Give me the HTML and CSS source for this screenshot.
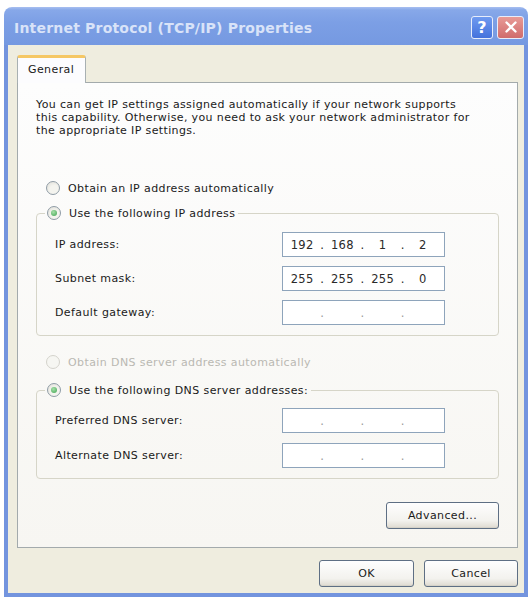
FILE: index.html
```html
<!DOCTYPE html>
<html>
<head>
<meta charset="utf-8">
<title>Internet Protocol (TCP/IP) Properties</title>
<link rel="stylesheet" href="styles.css">
</head>
<body>
<div class="window">
  <div class="titlebar">
    <span class="title">Internet Protocol (TCP/IP) Properties</span>
    <div class="tb-buttons">
      <span class="tb help">?</span>
      <span class="tb close"><svg viewBox="0 0 20 20" width="20" height="20"><path d="M5 5 L15 15 M15 5 L5 15" stroke="#fff" stroke-width="2.6" stroke-linecap="round"/></svg></span>
    </div>
  </div>
  <div class="client">
    <div class="tabs"><div class="tab">General</div></div>
    <div class="panel">
      <p class="intro">You can get IP settings assigned automatically if your network supports<br>this capability. Otherwise, you need to ask your network administrator for<br>the appropriate IP settings.</p>
      <div class="radio-row first"><span class="radio"></span>Obtain an IP address automatically</div>
      <fieldset class="group ip">
        <legend><span class="radio on"></span>Use the following IP address</legend>
        <div class="row"><span class="label">IP address:</span>
          <div class="ipbox"><span>192</span><i>.</i><span>168</span><i>.</i><span>1</span><i>.</i><span>2</span></div></div>
        <div class="row"><span class="label">Subnet mask:</span>
          <div class="ipbox"><span>255</span><i>.</i><span>255</span><i>.</i><span>255</span><i>.</i><span>0</span></div></div>
        <div class="row"><span class="label">Default gateway:</span>
          <div class="ipbox empty"><span></span><i>.</i><span></span><i>.</i><span></span><i>.</i><span></span></div></div>
      </fieldset>
      <div class="radio-row disabled"><span class="radio"></span>Obtain DNS server address automatically</div>
      <fieldset class="group dns">
        <legend><span class="radio on"></span>Use the following DNS server addresses:</legend>
        <div class="row"><span class="label">Preferred DNS server:</span>
          <div class="ipbox empty"><span></span><i>.</i><span></span><i>.</i><span></span><i>.</i><span></span></div></div>
        <div class="row"><span class="label">Alternate DNS server:</span>
          <div class="ipbox empty"><span></span><i>.</i><span></span><i>.</i><span></span><i>.</i><span></span></div></div>
      </fieldset>
      <div class="adv-row"><button class="btn adv">Advanced...</button></div>
    </div>
    <div class="actions">
      <button class="btn ok">OK</button>
      <button class="btn cancel">Cancel</button>
    </div>
  </div>
</div>
</body>
</html>
```

FILE: styles.css
```css
* { box-sizing: border-box; }
html, body { margin: 0; padding: 0; background: #ffffff; }
body {
  font-family: "DejaVu Sans", "Liberation Sans", Arial, sans-serif;
  font-size: 11px;
  letter-spacing: 0.4px;
  color: #1a1a1a;
}

.window {
  margin: 7px 3px 0 4px;
  width: 524px;
  display: flex;
  flex-direction: column;
}

.titlebar {
  height: 38px;
  border-radius: 8px 8px 0 0;
  background: linear-gradient(#a8bff0 0, #87a8e9 3px, #7c9fe5 40%, #7599e1 100%);
  display: flex;
  align-items: center;
  padding: 4px 4px 0 10px;
}
.title {
  flex: 1;
  font-weight: bold;
  font-size: 14px;
  letter-spacing: 0.2px;
  color: #d9e3f8;
}
.tb-buttons { display: flex; gap: 4px; margin-top: -2px; }
.tb {
  width: 22px;
  height: 23px;
  border-radius: 3px;
  border: 1px solid #e7edfb;
  display: flex;
  align-items: center;
  justify-content: center;
  color: #fff;
  font-weight: bold;
  font-size: 16px;
  letter-spacing: 0;
}
.help { background: linear-gradient(#6f9af0, #4472dc); }
.close { width: 27px; background: linear-gradient(#e89a96, #d06c6c); }
.close svg { width: 18px; height: 18px; }

.client {
  background: #efeddf;
  border: 4px solid #7394de;
  border-top: 0;
  padding: 10px 6px 6px 9px;
  display: flex;
  flex-direction: column;
}

.tabs { display: flex; height: 27px; }
.tab {
  width: 69px;
  height: 28px;
  background: #fcfcfe;
  border: 1px solid #a8b0b2;
  border-top: 3px solid #f5c764;
  border-bottom: 0;
  border-radius: 3px 3px 0 0;
  padding: 5px 0 0 10px;
  position: relative;
  z-index: 1;
}

.panel {
  background: linear-gradient(#fdfdfd, #f7f6f2);
  border: 1px solid #a3aaac;
  padding: 15px 18px 18px 18px;
}

.intro {
  margin: 0;
  line-height: 13px;
  letter-spacing: 0.37px;
}

.radio-row {
  display: flex;
  align-items: center;
  height: 16px;
  padding-left: 10px;
}
.radio-row.first { margin-top: 43px; }
.radio-row.disabled { margin-top: 18px; color: #b9b8b2; }
.radio {
  width: 14px;
  height: 14px;
  border-radius: 50%;
  border: 1px solid #8f9ca6;
  background: radial-gradient(circle at 60% 65%, #f4f4ef 40%, #dddcd6 100%);
  margin-right: 8px;
  flex: none;
  display: flex;
  align-items: center;
  justify-content: center;
}
.radio-row.disabled .radio { border-color: #d4d3cc; background: #f6f6f2; }
.radio.on::after {
  content: "";
  width: 6px;
  height: 6px;
  border-radius: 50%;
  background: radial-gradient(circle at 40% 35%, #a6e0a8, #3ea352);
}

.group {
  margin: 9px 0 0 0;
  border: 1px solid #d6d5c8;
  border-radius: 4px;
  padding: 0 0 10px 8px;
  min-inline-size: 0;
}
.group legend {
  display: flex;
  align-items: center;
  height: 16px;
  padding: 0 3px 0 2px;
}
.group.dns { margin-top: 12px; }

.row {
  display: grid;
  grid-template-columns: 227px 163px;
  align-items: center;
  padding-left: 10px;
  height: 25px;
  margin-top: 9px;
}
.ip .row:first-of-type { margin-top: 11px; }
.dns .row { margin-top: 10px; }

.ipbox {
  height: 25px;
  border: 1px solid #8ea4bb;
  background: #fff;
  display: grid;
  grid-template-columns: 1fr 6px 1fr 6px 1fr 6px 1fr;
  align-items: center;
  text-align: center;
  padding: 0 4px 0 2px;
  color: #2a2a2a;
  font-size: 11.5px;
  letter-spacing: 0.2px;
}
.ipbox i { font-style: normal; }
.ipbox.empty i { color: #9a9a9a; }

.adv-row { display: flex; justify-content: flex-end; margin-top: 23px; }

.btn {
  font-family: "DejaVu Sans", "Liberation Sans", Arial, sans-serif;
  font-size: 11px;
  letter-spacing: 0.4px;
  color: #1a1a1a;
  height: 27px;
  border: 1px solid #5e6f84;
  border-radius: 3px;
  background: linear-gradient(#fefefe, #f3f2ee 70%, #dedad0);
  box-shadow: inset 0 -1px 0 #d5d2c8;
  padding: 0;
}
.adv { width: 113px; }
.actions {
  display: flex;
  justify-content: flex-end;
  gap: 10px;
  margin-top: 12px;
}
.ok { width: 95px; }
.cancel { width: 94px; }
```
